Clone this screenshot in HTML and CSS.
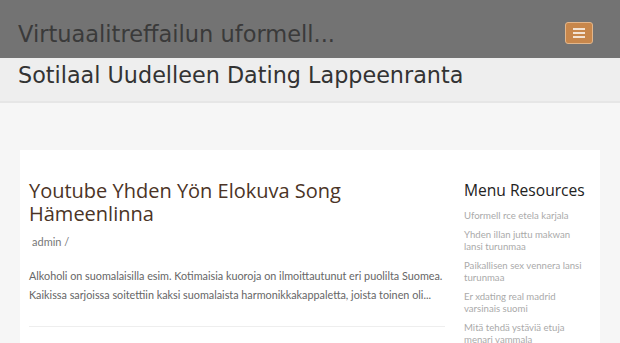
FILE: index.html
```html
<!DOCTYPE html>
<html lang="fi">
<head>
    <meta charset="UTF-8">
    <meta name="viewport" content="width=device-width, initial-scale=1.0">
    <title>Sotilaal Uudelleen Dating Lappeenranta</title>
    <link rel="stylesheet" href="styles.css">
</head>
<body>
    <header class="site-header">
        <div class="site-title">Virtuaalitreffailun uformell...</div>
        <button class="menu-toggle" aria-label="Menu">
            <span></span><span></span><span></span>
        </button>
    </header>

    <div class="page-band">
        <h1 class="page-title">Sotilaal Uudelleen Dating Lappeenranta</h1>
    </div>

    <div class="container">
        <div class="content-card">
            <!-- Post -->
            <main class="post">
                <h2 class="post-title">Youtube Yhden Yön Elokuva Song Hämeenlinna</h2>
                <p class="post-meta">admin /</p>
                <p class="post-excerpt">Alkoholi on suomalaisilla esim. Kotimaisia kuoroja on ilmoittautunut eri puolilta Suomea. Kaikissa sarjoissa soitettiin kaksi suomalaista harmonikkakappaletta, joista toinen oli...</p>
            </main>

            <!-- Sidebar -->
            <aside class="sidebar">
                <h3 class="widget-title">Menu Resources</h3>
                <ul class="widget-list">
                    <li><a href="#">Uformell rce etela karjala</a></li>
                    <li><a href="#">Yhden illan juttu makwan lansi turunmaa</a></li>
                    <li><a href="#">Paikallisen sex vennera lansi turunmaa</a></li>
                    <li><a href="#">Er xdating real madrid varsinais suomi</a></li>
                    <li><a href="#">Mitä tehdä ystäviä etuja menari vammala</a></li>
                </ul>
            </aside>
        </div>
    </div>
</body>
</html>
```

FILE: styles.css
```css
:root {
    --header: #737373;
    --band: #eeeeee;
    --page: #f6f6f6;
    --accent: #c8874b;
    --brown: #4b3426;
}

body {
    margin: 0;
    padding: 0;
    background: var(--page);
    font-family: "DejaVu Sans", sans-serif;
    overflow: hidden;
}

.site-header {
    background-color: var(--header);
    height: 58px;
    display: flex;
    align-items: center;
    justify-content: space-between;
    padding: 0 27px 0 18px;
    box-sizing: border-box;
}

.site-title {
    font-size: 22.5px;
    color: #3a3a3a;
    padding-top: 9px;
}

.menu-toggle {
    width: 28px;
    height: 22px;
    margin-top: 7px;
    background-color: var(--accent);
    border: 1px solid #e2b68b;
    border-radius: 3px;
    padding: 0;
    display: flex;
    flex-direction: column;
    align-items: center;
    justify-content: center;
    gap: 2px;
}

.menu-toggle span {
    display: block;
    width: 12px;
    height: 2px;
    background: #f3e3d3;
}

.page-band {
    background-color: var(--band);
    height: 43px;
    border-bottom: 2px solid #e6e6e6;
    padding: 0 18px;
}

.page-title {
    margin: 0;
    padding-top: 4px;
    font-size: 22.3px;
    font-weight: normal;
    color: #333;
}

.container {
    padding: 47px 20px 0;
}

.content-card {
    background: white;
    display: flex;
    gap: 19px;
    padding: 29px 8px 0 9px;
    min-height: 300px;
}

.post {
    width: 416px;
    flex-shrink: 0;
    border-bottom: 1px solid #eeeeee;
    align-self: flex-start;
    padding-bottom: 22px;
}

.post-title {
    margin: 0;
    font-family: "Open Sans", sans-serif;
    font-size: 20px;
    font-weight: 500;
    line-height: 23px;
    color: var(--brown);
}

.post-meta {
    margin: 10px 0 0 3px;
    font-family: "Lato", sans-serif;
    font-size: 11px;
    color: #777;
}

.post-excerpt {
    margin: 18px 0 0;
    font-family: "Lato", sans-serif;
    font-size: 10.8px;
    line-height: 19px;
    color: #666;
}

.sidebar {
    flex: 1;
}

.widget-title {
    margin: 0 0 9px;
    font-family: "Open Sans", sans-serif;
    font-size: 15.6px;
    font-weight: 500;
    white-space: nowrap;
    color: #222;
}

.widget-list {
    list-style: none;
    width: 122px;
    margin: 0;
    padding: 0;
}

.widget-list li {
    font-family: "Lato", sans-serif;
    font-size: 9.6px;
    line-height: 12px;
    margin-bottom: 7px;
}

.widget-list a {
    color: #aaa;
    text-decoration: none;
}
```
